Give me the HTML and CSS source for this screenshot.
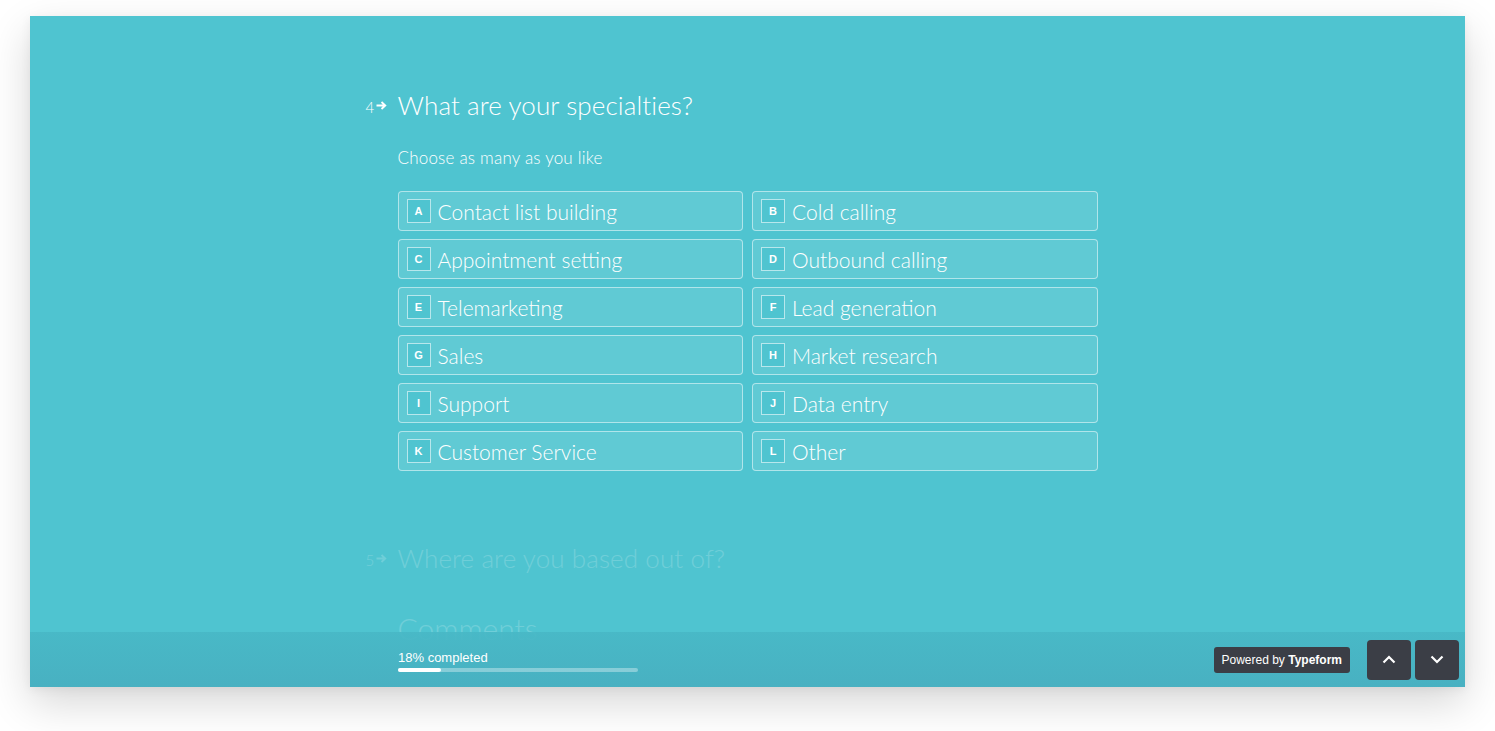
FILE: index.html
```html
<!DOCTYPE html>
<html lang="en">
<head>
    <meta charset="UTF-8">
    <meta name="viewport" content="width=device-width, initial-scale=1.0">
    <title>Typeform - Specialties</title>
    <link rel="stylesheet" href="styles.css">
</head>
<body>
    <div class="window">
        <div class="form">
            <section class="question">
                <div class="question-title">
                    <span class="question-num">4<svg width="11" height="9" viewBox="0 0 11 9"><path d="M0.5 4.5h8.5M5.5 1l3.8 3.5-3.8 3.5" fill="none" stroke="#fff" stroke-width="1.8"/></svg></span>
                    <h1>What are your specialties?</h1>
                </div>
                <p class="hint">Choose as many as you like</p>
                <div class="choices">
                    <div class="choice"><span class="key">A</span>Contact list building</div>
                    <div class="choice"><span class="key">B</span>Cold calling</div>
                    <div class="choice"><span class="key">C</span>Appointment setting</div>
                    <div class="choice"><span class="key">D</span>Outbound calling</div>
                    <div class="choice"><span class="key">E</span>Telemarketing</div>
                    <div class="choice"><span class="key">F</span>Lead generation</div>
                    <div class="choice"><span class="key">G</span>Sales</div>
                    <div class="choice"><span class="key">H</span>Market research</div>
                    <div class="choice"><span class="key">I</span>Support</div>
                    <div class="choice"><span class="key">J</span>Data entry</div>
                    <div class="choice"><span class="key">K</span>Customer Service</div>
                    <div class="choice"><span class="key">L</span>Other</div>
                </div>
            </section>

            <section class="question faded">
                <div class="question-title">
                    <span class="question-num">5<svg width="11" height="9" viewBox="0 0 11 9"><path d="M0.5 4.5h8.5M5.5 1l3.8 3.5-3.8 3.5" fill="none" stroke="#fff" stroke-width="1.8"/></svg></span>
                    <h1>Where are you based out of?</h1>
                </div>
            </section>

            <section class="question faded">
                <h2 class="big-title">Comments</h2>
            </section>
        </div>

        <footer class="bottom-bar">
            <div class="progress">
                <span class="progress-label">18% completed</span>
                <div class="progress-track"><div class="progress-fill" style="width: 18%;"></div></div>
            </div>
            <div class="bar-right">
                <a href="#" class="powered">Powered by <b>Typeform</b></a>
                <div class="nav">
                    <button class="nav-btn" aria-label="Previous"><svg width="14" height="9" viewBox="0 0 14 9"><path d="M1.5 7.5l5.5-5.5 5.5 5.5" fill="none" stroke="#fff" stroke-width="2.2"/></svg></button>
                    <button class="nav-btn" aria-label="Next"><svg width="14" height="9" viewBox="0 0 14 9"><path d="M1.5 1.5l5.5 5.5 5.5-5.5" fill="none" stroke="#fff" stroke-width="2.2"/></svg></button>
                </div>
            </div>
        </footer>
    </div>
</body>
</html>
```

FILE: styles.css
```css
html {
    background: #ffffff;
}

body {
    margin: 0;
    padding: 16px 30px 44px;
    font-family: 'Lato', sans-serif;
}

.window {
    position: relative;
    height: 671px;
    background: #4fc4d0;
    overflow: hidden;
    box-shadow: 0 16px 40px rgba(0, 0, 0, 0.16), 0 2px 10px rgba(0, 0, 0, 0.06);
    color: #ffffff;
}

.form {
    width: 700px;
    margin: 0 auto;
    padding-top: 73px;
}

.question-title {
    display: flex;
    align-items: baseline;
}

.question-num {
    display: flex;
    align-items: center;
    gap: 2px;
    width: 32px;
    margin-left: -32px;
    font-size: 15px;
    font-weight: 300;
    position: relative;
    top: -2px;
}

.question-num svg {
    margin-top: -3px;
}

h1 {
    margin: 0;
    font-size: 26px;
    line-height: 32px;
    font-weight: 300;
    letter-spacing: 0.1px;
}

.hint {
    margin: 27px 0 0;
    font-size: 17px;
    line-height: 20px;
    font-weight: 300;
    letter-spacing: 0.2px;
}

.choices {
    display: grid;
    grid-template-columns: 1fr 1fr;
    gap: 8px 9px;
    margin-top: 23px;
}

.choice {
    display: flex;
    align-items: center;
    height: 40px;
    box-sizing: border-box;
    padding: 0 8px;
    border: 1px solid rgba(255, 255, 255, 0.5);
    border-radius: 4px;
    background: rgba(255, 255, 255, 0.1);
    font-size: 21px;
    font-weight: 300;
}

.key {
    display: flex;
    align-items: center;
    justify-content: center;
    width: 24px;
    height: 24px;
    box-sizing: border-box;
    margin-right: 7px;
    border: 1px solid rgba(255, 255, 255, 0.6);
    background: #4fc4d0;
    font-family: 'Liberation Sans', sans-serif;
    font-size: 11px;
    font-weight: 700;
}

.question.faded {
    opacity: 0.18;
}

.question.faded:nth-child(2) {
    margin-top: 71px;
}

.big-title {
    margin: 36px 0 0;
    font-size: 30px;
    font-weight: 300;
}

.bottom-bar {
    position: absolute;
    left: 0;
    right: 0;
    bottom: 0;
    height: 55px;
    display: flex;
    justify-content: space-between;
    align-items: center;
    padding: 0 6px 0 368px;
    background: linear-gradient(to bottom, rgba(72, 184, 198, 0.92), rgba(72, 176, 193, 0.97));
}

.progress {
    display: flex;
    flex-direction: column;
    gap: 3px;
    width: 240px;
    padding-top: 2px;
}

.progress-label {
    font-family: 'Liberation Sans', sans-serif;
    font-size: 13px;
}

.progress-track {
    height: 4px;
    border-radius: 2px;
    background: rgba(255, 255, 255, 0.35);
}

.progress-fill {
    height: 100%;
    border-radius: 2px;
    background: #ffffff;
}

.bar-right {
    display: flex;
    align-items: center;
    gap: 17px;
}

.powered {
    display: block;
    padding: 6px 8px;
    border-radius: 3px;
    background: #3b3e46;
    color: #ffffff;
    text-decoration: none;
    font-family: 'Liberation Sans', sans-serif;
    font-size: 12px;
    line-height: 14px;
}

.nav {
    display: flex;
    gap: 4px;
}

.nav-btn {
    display: flex;
    align-items: center;
    justify-content: center;
    width: 44px;
    height: 40px;
    padding: 0;
    border: none;
    border-radius: 4px;
    background: #3b3e46;
    cursor: pointer;
}
```
